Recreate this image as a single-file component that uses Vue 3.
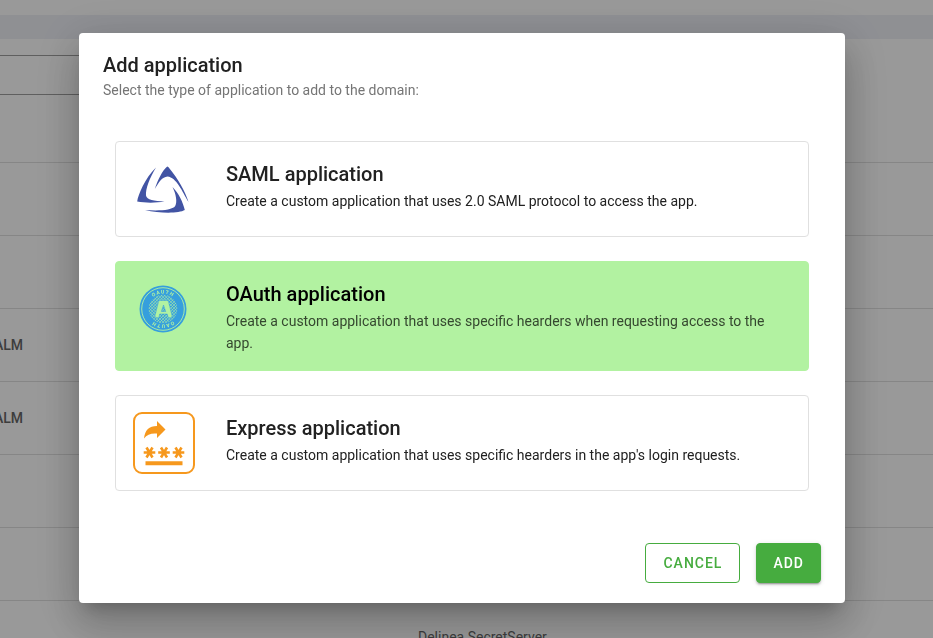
<script setup>
import { ref } from 'vue'

const selected = ref('oauth')
const search = ref('')

const options = [
  {
    id: 'saml',
    title: 'SAML application',
    text: 'Create a custom application that uses 2.0 SAML protocol to access the app.',
  },
  {
    id: 'oauth',
    title: 'OAuth application',
    text: 'Create a custom application that uses specific hearders when requesting access to the app.',
  },
  {
    id: 'express',
    title: 'Express application',
    text: "Create a custom application that uses specific hearders in the app's login requests.",
  },
]

const rows = [
  { realm: '', name: '' },
  { realm: '', name: '' },
  { realm: 'ALM', name: '' },
  { realm: 'ALM', name: '' },
  { realm: '', name: '' },
  { realm: '', name: '' },
  { realm: '', name: 'Delinea SecretServer' },
]
</script>

<template>
  <div class="page">
    <div class="band"></div>
    <div class="toolbar">
      <input v-model="search" class="search" type="text" aria-label="Search applications" />
    </div>
    <table class="apps">
      <tbody>
        <tr class="head-row"><td class="realm"></td><td></td></tr>
        <tr v-for="(row, i) in rows" :key="i">
          <td class="realm"><span class="clip">{{ row.realm }}</span></td>
          <td class="name">{{ row.name }}</td>
        </tr>
      </tbody>
    </table>
  </div>

  <div class="overlay">
    <form class="dialog" role="dialog" aria-labelledby="dialog-title" @submit.prevent>
      <header>
        <h1 id="dialog-title">Add application</h1>
        <p class="subtitle">Select the type of application to add to the domain:</p>
      </header>

      <div class="options" role="radiogroup" aria-labelledby="dialog-title">
        <label
          v-for="option in options"
          :key="option.id"
          class="option"
          :class="{ selected: selected === option.id }"
        >
          <input v-model="selected" class="radio" type="radio" name="type" :value="option.id" />
          <svg v-if="option.id === 'saml'" class="icon" viewBox="0 0 64 62" aria-hidden="true">
            <g fill="#4254a4">
              <path d="M35.200 8.500Q36.300 8.500 37.500 10.500C46 21 53 33 56.500 44C50 33 44.500 19.500 35.500 18.500C30 19 27 24 22.800 31C26 21.500 30.500 12.500 35.200 8.500Z" />
              <path d="M24 9.500C17.500 20 13.500 31 14 37.500C14.800 42 22 43 32.500 43.500C24 45 13 45 5.200 43.500C6 37 13 20 24 9.500Z" />
              <path d="M40.500 29C46.500 35 51 44 52.800 52C47 55.500 28 55.500 13 52C26 53 40 52.500 43.200 48C45.500 44 44 36 40.500 29Z" />
            </g>
          </svg>
          <svg v-else-if="option.id === 'oauth'" class="icon" viewBox="0 0 64 62" aria-hidden="true">
            <defs>
              <pattern id="mesh" width="2.200" height="2.200" patternUnits="userSpaceOnUse" patternTransform="rotate(45)">
                <path d="M0 0H2.200M0 0V2.200" stroke="#b2f2a1" stroke-width=".9" />
              </pattern>
              <path id="arc-top" d="M15.500 31A15.500 15.500 0 0 1 46.500 31" />
              <path id="arc-bottom" d="M46.500 31A15.500 15.500 0 0 1 15.500 31" />
            </defs>
            <circle cx="31" cy="31" r="23.500" fill="#369fdd" />
            <circle cx="31" cy="31" r="21.300" fill="none" stroke="#b2f2a1" stroke-width=".9" />
            <circle cx="31" cy="31" r="14.300" fill="url(#mesh)" />
            <path d="M28 22.500h7q1.200 0 1.500 1.200l3.500 14q.4 2-1.600 2h-1q-1.300 0-1.600-1.400l-.5-2.300h-7.600l-.5 2.300q-.3 1.400-1.600 1.400h-1q-2 0-1.600-2l3.500-14q.3-1.200 1.500-1.200Zm3.500 4.500l-2.200 6.500h4.400Z" fill="#b2f2a1" stroke="#369fdd" stroke-width=".5" />
            <g class="seal">
              <text><textPath href="#arc-top" startOffset="50%">OAUTH</textPath></text>
              <text transform="rotate(180 31 31)"><textPath href="#arc-top" startOffset="50%">OAUTH</textPath></text>
            </g>
          </svg>
          <svg v-else class="icon" viewBox="0 0 64 62" aria-hidden="true">
            <rect x="2" y="1" width="60" height="60" rx="8" fill="none" stroke="#f6981d" stroke-width="2" />
            <path d="M12 26.500C13 18 17 14 25 14V9L33.500 17.500L25 26V21.500C19 21 15 22.500 12 26.500Z" fill="#f6981d" />
            <g stroke="#f6981d" stroke-width="2.600">
              <path v-for="x in [17.5, 32, 46.5]" :key="x" :d="`M${x - 5.8} 40.500h11.600M${x - 3} 35.500l6 10M${x + 3} 35.500l-6 10`" />
            </g>
            <path d="M13.500 51.200h37" stroke="#f6981d" stroke-width="4" />
          </svg>
          <span class="copy">
            <span class="title">{{ option.title }}</span>
            <span class="text">{{ option.text }}</span>
          </span>
        </label>
      </div>

      <footer>
        <button class="btn outlined" type="button">CANCEL</button>
        <button class="btn filled" type="submit">ADD</button>
      </footer>
    </form>
  </div>
</template>

<style>
body {
  margin: 0;
  font-family: Roboto, "Liberation Sans", sans-serif;
}
</style>

<style scoped>
* {
  box-sizing: border-box;
}

.page {
  height: 100vh;
  overflow: hidden;
  padding-top: 15px;
  background: #fff;
}

.band {
  height: 24px;
  background: #eef0f6;
}

.toolbar {
  padding: 16px 0;
}

.search {
  display: block;
  width: 40%;
  height: 40px;
  padding: 0 12px;
  border: solid #9e9e9e;
  border-width: 1px 1px 1px 0;
  background: transparent;
}

.apps {
  width: 100%;
  table-layout: fixed;
  border-collapse: separate;
  border-spacing: 0;
  font-size: 14px;
  font-weight: 500;
  color: #666;
}

.apps td {
  height: 73px;
  padding: 0;
  border-bottom: 1px solid #e0e0e0;
}

.apps .head-row td {
  height: 52px;
}

.apps .realm {
  width: 23px;
}

.clip {
  display: flex;
  justify-content: flex-end;
  overflow: hidden;
}

.apps .name {
  padding-left: 395px;
  font-weight: 400;
}

.overlay {
  position: fixed;
  inset: 0;
  overflow: auto;
  padding: 33px 88px 35px 79px;
  background: rgba(0, 0, 0, 0.4);
}

.dialog {
  padding: 20px 24px;
  border-radius: 4px;
  background: #fff;
  color: #212121;
  box-shadow: 0 11px 15px -7px rgba(0, 0, 0, 0.2), 0 24px 38px 3px rgba(0, 0, 0, 0.14),
    0 9px 46px 8px rgba(0, 0, 0, 0.12);
}

h1 {
  margin: 0;
  font-size: 20px;
  font-weight: 500;
  line-height: 24px;
}

.subtitle {
  margin: 2px 0 0;
  font-size: 14px;
  line-height: 22px;
  color: #757575;
}

.options {
  display: flex;
  flex-direction: column;
  gap: 24px;
  padding: 40px 12px 52px;
}

.option {
  position: relative;
  display: flex;
  align-items: flex-start;
  gap: 30px;
  padding: 16px;
  border: 1px solid #e0e0e0;
  border-radius: 4px;
  cursor: pointer;
}

.option.selected {
  border-color: #b2f2a1;
  background: #b2f2a1;
}

.radio {
  position: absolute;
  opacity: 0;
}

.icon {
  flex: none;
  width: 64px;
  height: 62px;
}

.seal {
  font-size: 5px;
  font-weight: 700;
  letter-spacing: 1px;
  text-anchor: middle;
  fill: #b2f2a1;
}

.copy {
  display: flex;
  flex-direction: column;
}

.title {
  font-size: 20px;
  font-weight: 500;
  line-height: 32px;
}

.text {
  font-size: 14px;
  line-height: 22px;
}

.selected .title {
  color: #000;
}

.selected .text {
  color: #35482f;
}

footer {
  display: flex;
  justify-content: flex-end;
  gap: 16px;
}

.btn {
  height: 40px;
  padding: 0 17px;
  border: 1px solid #46ac3f;
  border-radius: 4px;
  font: 500 14px Roboto, "Liberation Sans", sans-serif;
  letter-spacing: 1px;
  cursor: pointer;
}

.outlined {
  background: #fff;
  color: #46ac3f;
}

.filled {
  padding: 0 16px;
  background: #46ac3f;
  color: #fff;
  box-shadow: 0 3px 1px -2px rgba(0, 0, 0, 0.2), 0 2px 2px rgba(0, 0, 0, 0.14),
    0 1px 5px rgba(0, 0, 0, 0.12);
}
</style>
